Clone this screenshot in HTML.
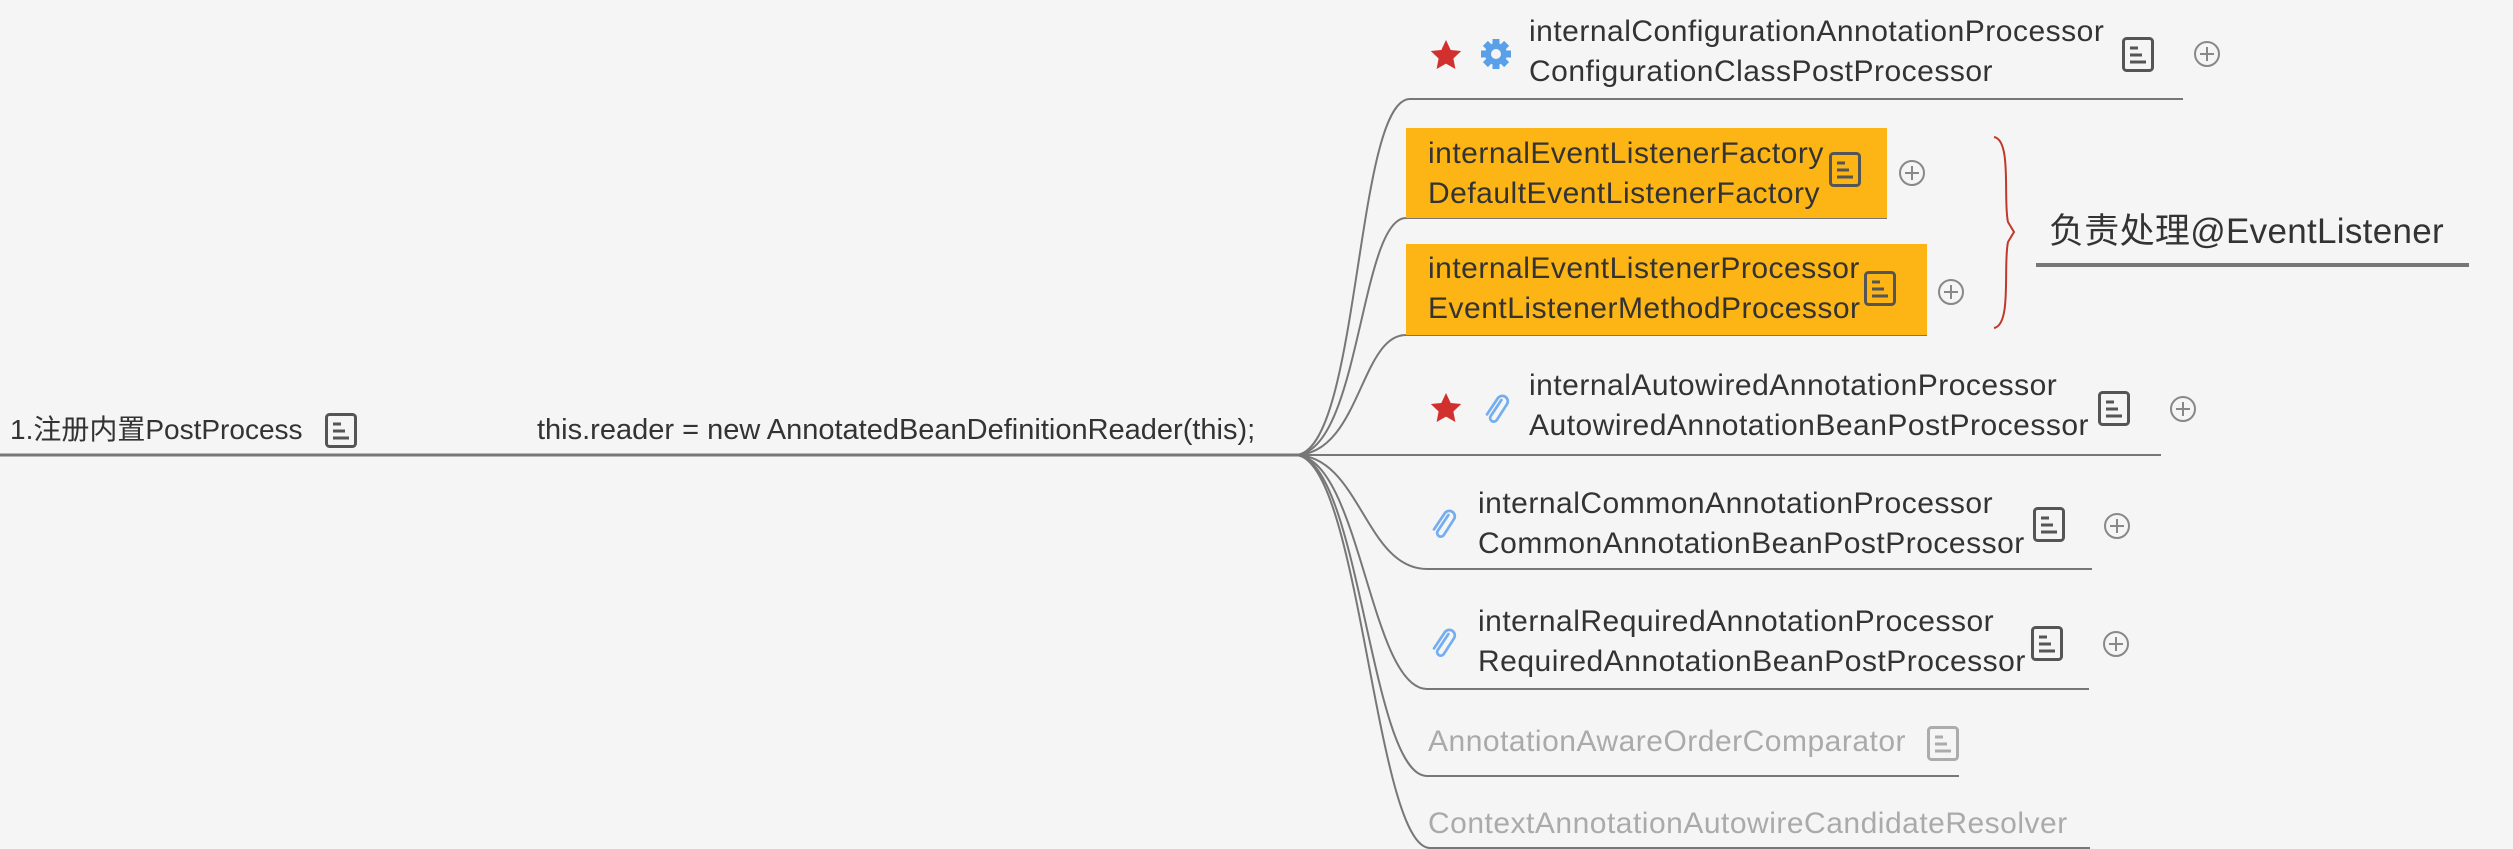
<!DOCTYPE html>
<html><head><meta charset="utf-8"><style>
body{margin:0;width:2513px;height:849px;background:#f5f5f5;overflow:hidden;position:relative;font-family:"Liberation Sans","Noto Sans CJK SC",sans-serif;color:#333}
.t{position:absolute;font-size:30px;line-height:40px;white-space:nowrap;letter-spacing:0.5px}
.box{position:absolute;background:#fcb514}
svg{position:absolute;left:0;top:0}
</style></head><body>
<svg width="2513" height="849" viewBox="0 0 2513 849">
<defs>
<g id="note"><rect x="1.5" y="1.5" width="29" height="32" rx="3" fill="none" stroke="#555" stroke-width="3"/><line x1="8" y1="11" x2="16" y2="11" stroke="#555" stroke-width="3"/><line x1="8" y1="18" x2="20" y2="18" stroke="#555" stroke-width="3"/><line x1="8" y1="25" x2="24" y2="25" stroke="#555" stroke-width="3"/></g>
<g id="plus"><circle cx="0" cy="0" r="12" fill="none" stroke="#888" stroke-width="2"/><line x1="-7" y1="0" x2="7" y2="0" stroke="#888" stroke-width="2"/><line x1="0" y1="-7" x2="0" y2="7" stroke="#888" stroke-width="2"/></g>
<path id="star" d="M0,-16 L4.7,-6 L15.2,-5 L7.4,2.5 L9.4,13 L0,7.6 L-9.4,13 L-7.4,2.5 L-15.2,-5 L-4.7,-6 Z" fill="#d1302f"/>
<path id="clip" d="M6,-10 L-6,8 A4,4 0 0 0 1,12 L12,-5 A6,6 0 0 0 2,-12 L-10,6" fill="none" stroke="#74aef0" stroke-width="3" stroke-linecap="round" transform="scale(0.9)"/>
</defs>
<g fill="none" stroke="#777" stroke-width="2">
<line x1="0" y1="455" x2="1300" y2="455" stroke-width="3"/>
<path d="M1295,455 C1360,455 1355,99 1410,99 L2183,99"/>
<path d="M1295,455 C1360,455 1360,218 1406,218 L1887,218"/>
<path d="M1295,455 C1360,455 1360,335 1406,335 L1927,335"/>
<line x1="1295" y1="455" x2="2161" y2="455"/>
<path d="M1295,455 C1360,455 1365,569 1427,569 L2092,569"/>
<path d="M1295,455 C1360,455 1370,689 1427,689 L2089,689"/>
<path d="M1295,455 C1360,455 1370,776 1427,776 L1959,776"/>
<path d="M1295,455 C1360,455 1375,848 1430,848 L2090,848"/>
<line x1="2036" y1="265" x2="2469" y2="265" stroke-width="4"/>
</g>
<path d="M1994,137 C2012,140 2003,200 2008,222 L2014,232 L2008,242 C2003,265 2012,325 1994,328" fill="none" stroke="#c0392b" stroke-width="2"/>
<use href="#star" x="1446" y="56"/>
<g transform="translate(1496,54)"><circle r="11" fill="#5aa0e8"/><g fill="#5aa0e8"><rect x="-3.5" y="-15" width="7" height="30"/><rect x="-15" y="-3.5" width="30" height="7"/><rect x="-3.5" y="-15" width="7" height="30" transform="rotate(45)"/><rect x="-3.5" y="-15" width="7" height="30" transform="rotate(-45)"/></g><circle r="5" fill="#f5f5f5"/></g>
<use href="#star" x="1446" y="409"/>
<use href="#clip" x="1496" y="409"/>
<use href="#clip" x="1443" y="524"/>
<use href="#clip" x="1443" y="643"/>
<use href="#note" x="325" y="413"/>
<use href="#note" x="2122" y="37"/>
<use href="#note" x="2098" y="391"/>
<use href="#note" x="2033" y="507"/>
<use href="#note" x="2031" y="626"/>
<g opacity="0.45"><use href="#note" x="1927" y="726"/></g>
<use href="#plus" x="2207" y="54"/>
<use href="#plus" x="1912" y="173"/>
<use href="#plus" x="1951" y="292"/>
<use href="#plus" x="2183" y="409"/>
<use href="#plus" x="2117" y="526"/>
<use href="#plus" x="2116" y="644"/>
</svg>
<div class="box" style="left:1406px;top:128px;width:481px;height:90px"></div>
<div class="box" style="left:1406px;top:244px;width:521px;height:91px"></div>
<svg width="2513" height="849" viewBox="0 0 2513 849" style="pointer-events:none">
<use href="#note" x="1829" y="152"/><use href="#note" x="1864" y="271"/>
</svg>
<div class="t" style="left:10px;top:410px;font-size:28px;letter-spacing:0">1.注册内置PostProcess</div>
<div class="t" style="left:537px;top:410px;font-size:29px;letter-spacing:0">this.reader = new AnnotatedBeanDefinitionReader(this);</div>
<div class="t" style="left:1529px;top:12px">internalConfigurationAnnotationProcessor<br>ConfigurationClassPostProcessor</div>
<div class="t" style="left:1428px;top:134px">internalEventListenerFactory<br>DefaultEventListenerFactory</div>
<div class="t" style="left:1428px;top:249px">internalEventListenerProcessor<br>EventListenerMethodProcessor</div>
<div class="t" style="left:2049px;top:209px;font-size:35px;line-height:46px;letter-spacing:0.3px">负责处理@EventListener</div>
<div class="t" style="left:1529px;top:366px">internalAutowiredAnnotationProcessor<br>AutowiredAnnotationBeanPostProcessor</div>
<div class="t" style="left:1478px;top:484px">internalCommonAnnotationProcessor<br>CommonAnnotationBeanPostProcessor</div>
<div class="t" style="left:1478px;top:602px">internalRequiredAnnotationProcessor<br>RequiredAnnotationBeanPostProcessor</div>
<div class="t" style="left:1428px;top:722px;color:#aaa">AnnotationAwareOrderComparator</div>
<div class="t" style="left:1428px;top:804px;color:#aaa">ContextAnnotationAutowireCandidateResolver</div>
</body></html>
